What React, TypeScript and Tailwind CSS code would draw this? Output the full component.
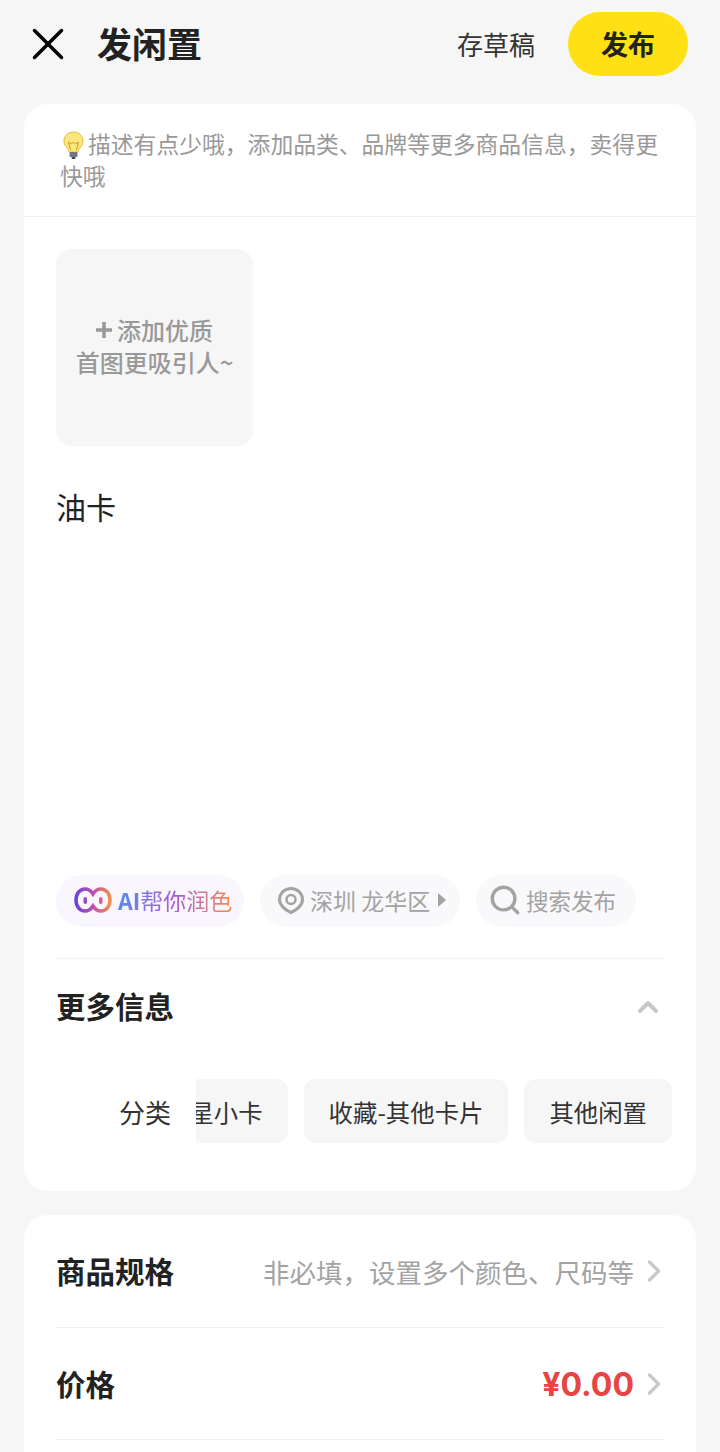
import { ChevronRight, ChevronUp, Search } from 'lucide-react'

function Bulb() {
  return (
    <svg viewBox="0 0 27 30" className="inline-block w-[28px] h-[30px] align-[-7px]">
      <path d="M13 2c-5.500 0-9.500 4-9.500 9 0 3.500 2 5.500 3.500 7.500 1 1.300 1.500 2.500 1.500 3.500h9c0-1 .5-2.200 1.500-3.500 1.500-2 3.500-4 3.500-7.500 0-5-4-9-9.500-9z" fill="#fbe77a" stroke="#e3b93a" strokeWidth="1" />
      <path d="M10 20l-2-8 3 2 2-2 2 2 3-2-2 8" fill="none" stroke="#c79a2a" strokeWidth="1" />
      <rect x="9" y="22" width="8" height="5" rx="1" fill="#6f7780" />
      <rect x="11" y="27" width="4" height="2" rx="1" fill="#3c4248" />
    </svg>
  )
}

function AiMark() {
  return (
    <svg viewBox="0 0 38 26" className="w-[38px] h-[26px]">
      <defs>
        <linearGradient id="ai-mark" x1="0" y1="0" x2="1" y2="0">
          <stop offset="0" stopColor="#6a43d8" />
          <stop offset="0.5" stopColor="#c04fb0" />
          <stop offset="1" stopColor="#f0904a" />
        </linearGradient>
      </defs>
      <path d="M19 7C17 3.800 14.500 2 11 2 5.800 2 2 6.800 2 13s3.800 11 9 11c3.500 0 6-1.800 8-5 2 3.200 4.500 5 8 5 5.200 0 9-4.800 9-11S32.200 2 27 2c-3.500 0-6 1.800-8 5z" fill="none" stroke="url(#ai-mark)" strokeWidth="3.500" />
      <rect x="9.500" y="10" width="3.500" height="7" rx="1.750" fill="#9a4bc4" />
      <rect x="25" y="10" width="3.500" height="7" rx="1.750" fill="#d8608c" />
    </svg>
  )
}

function Pin() {
  return (
    <svg viewBox="0 0 26 27" className="w-[26px] h-[27px]">
      <path d="M13 1.500C6.500 1.500 1.500 6.500 1.500 12.500 1.500 18 7 23 13 25.500 19 23 24.500 18 24.500 12.500 24.500 6.500 19.500 1.500 13 1.500z" fill="none" stroke="#a3a3a3" strokeWidth="3" />
      <circle cx="13" cy="12.500" r="4.500" fill="none" stroke="#a3a3a3" strokeWidth="2.500" />
    </svg>
  )
}

export default function App() {
  return (
    <div className="h-[1452px] w-[720px] overflow-hidden bg-[#f6f6f6] text-[#222222] [font-family:'Noto_Sans_CJK_SC',sans-serif]">
      {/* top bar */}
      <header className="flex items-center h-[64px] mt-3 pl-8 pr-8">
        <svg viewBox="0 0 32 32" className="w-8 h-8">
          <path d="M2.500 2.500l27 27M29.500 2.500l-27 27" stroke="#000000" strokeWidth="3.500" strokeLinecap="round" />
        </svg>
        <h1 className="ml-[33px] pb-1 text-[35px] leading-none font-bold">发闲置</h1>
        <span className="ml-auto text-[26px] leading-none text-[#333333]">存草稿</span>
        <button className="ml-[33px] w-[120px] h-[64px] rounded-[32px] bg-[#ffe014] pb-[2px] text-[27px] font-bold leading-none">发布</button>
      </header>

      <main className="mx-6 mt-7 flex flex-col gap-6">
        <section className="rounded-[24px] bg-white pb-[48px]">
          <p className="pl-9 pr-7 pt-6 pb-6 border-b border-[#f0f0f0] text-[22.8px] leading-[32px] text-[#999999]">
            <Bulb />描述有点少哦，添加品类、品牌等更多商品信息，卖得更快哦
          </p>

          <div className="px-8 pt-8">
            <div className="flex w-[197px] h-[197px] flex-col items-center justify-center rounded-[16px] bg-[#f6f6f6] pb-1 text-[24px] leading-[32px] font-medium text-[#999999]">
              <span className="flex items-center gap-[5px]">
                <svg viewBox="0 0 16 16" className="w-4 h-4">
                  <path d="M8 0v16M0 8h16" stroke="#999999" strokeWidth="3.500" />
                </svg>
                添加优质
              </span>
              <span>首图更吸引人~</span>
            </div>

            <p className="mt-[38px] h-[391px] text-[30px] leading-[44px]">油卡</p>

            <div className="flex gap-4 text-[22.5px] leading-none text-[#a3a3a3]">
              <span className="flex h-[52px] w-[188px] items-center gap-[6px] rounded-full bg-[#f9f6fe] pl-[18px] pb-[2px]">
                <AiMark />
                <span className="text-[23px] bg-gradient-to-r from-[#4f8af0] via-[#a858d0] to-[#f58c40] bg-clip-text text-transparent"><b className="font-semibold">AI</b>帮你润色</span>
              </span>
              <span className="flex h-[52px] w-[200px] items-center gap-[6px] rounded-full bg-[#f9f9fb] pl-[18px] pb-[2px]">
                <Pin />
                <span className="text-[23px]">深圳 龙华区</span>
                <span className="ml-[2px] w-0 h-0 border-y-[7px] border-l-[8px] border-y-transparent border-l-[#a3a3a3]" />
              </span>
              <span className="flex h-[52px] w-[160px] items-center gap-1 rounded-full bg-[#f9f9fb] pl-3 pb-[2px]">
                <Search className="w-[34px] h-[34px]" strokeWidth={2.4} />
                <span>搜索发布</span>
              </span>
            </div>

            <div className="mt-[31px] flex h-[97px] items-center justify-between border-t border-[#f0f0f0]">
              <h2 className="pb-[2px] text-[29.5px] leading-none font-bold">更多信息</h2>
              <ChevronUp className="w-8 h-8 text-[#c8c8c8]" strokeWidth={3} />
            </div>

            <div className="mt-[24px] -mr-2 flex h-[64px] items-center text-[26px] leading-none">
              <span className="ml-[63px] shrink-0 pt-[2px] text-[#333333]">分类</span>
              <div className="ml-[25px] flex min-w-0 flex-1 justify-end gap-4 overflow-hidden text-[24.4px] text-[#333333]">
                <span className="flex h-[64px] shrink-0 items-center rounded-[12px] bg-[#f6f6f6] px-[25px] pt-[2px]">明星小卡</span>
                <span className="flex h-[64px] shrink-0 items-center rounded-[12px] bg-[#f6f6f6] px-[25px] pt-[2px]">收藏-其他卡片</span>
                <span className="flex h-[64px] shrink-0 items-center rounded-[12px] bg-[#f6f6f6] px-[25px] pt-[2px]">其他闲置</span>
              </div>
            </div>
          </div>
        </section>

        <section className="rounded-t-[24px] bg-white px-8 pb-[60px]">
          <div className="flex h-[113px] items-center border-b border-[#f0f0f0]">
            <h2 className="text-[29.5px] leading-none font-bold">商品规格</h2>
            <span className="ml-auto pt-[2px] text-[26.5px] leading-none text-[#a3a3a3]">非必填，设置多个颜色、尺码等</span>
            <ChevronRight className="ml-[2px] -mr-2 w-9 h-9 text-[#c8c8c8]" strokeWidth={2.2} />
          </div>
          <div className="flex h-[112px] items-center border-b border-[#f0f0f0]">
            <h2 className="text-[29.5px] leading-none font-bold">价格</h2>
            <span className="ml-auto pt-[2px] text-[32px] leading-none font-bold text-[#e84444] [font-family:Inter,'Noto_Sans_CJK_SC',sans-serif]">¥0.00</span>
            <ChevronRight className="ml-[2px] -mr-2 w-9 h-9 text-[#c8c8c8]" strokeWidth={2.2} />
          </div>
        </section>
      </main>
    </div>
  )
}
